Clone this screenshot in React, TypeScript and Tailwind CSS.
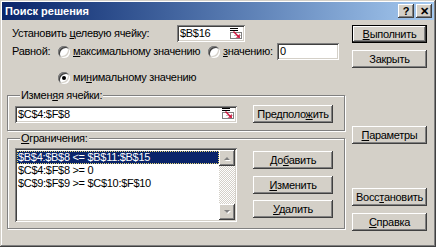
import React from 'react'

const raised =
  'bg-[#d4d0c8] shadow-[inset_-1px_-1px_#404040,inset_1px_1px_#fff,inset_-2px_-2px_#808080,inset_2px_2px_#d4d0c8]'
const sunken =
  'bg-white shadow-[inset_1px_1px_#808080,inset_-1px_-1px_#fff,inset_2px_2px_#404040,inset_-2px_-2px_#d4d0c8]'

function U({ children }: { children: React.ReactNode }) {
  return <span className="underline underline-offset-[1px]">{children}</span>
}

function Btn({
  children,
  w = 'w-[75px]',
  def = false,
  className = '',
}: {
  children: React.ReactNode
  w?: string
  def?: boolean
  className?: string
}) {
  return (
    <div
      className={`${w} h-[18px] flex items-center justify-center ${
        def ? 'border border-black' : ''
      } ${raised} ${className}`}
    >
      <span className="leading-none">{children}</span>
    </div>
  )
}

function Radio({ checked = false }: { checked?: boolean }) {
  return (
    <span
      className={`w-3 h-3 shrink-0 rounded-full flex items-center justify-center ${sunken}`}
    >
      {checked && <span className="w-1 h-1 rounded-full bg-black" />}
    </span>
  )
}

function RefIcon() {
  return (
    <svg width="14" height="12" viewBox="0 0 14 12" className="shrink-0">
      <rect x="1" y="0" width="8" height="1" fill="#000" />
      <rect x="1" y="2" width="8" height="1" fill="#000" />
      <rect x="1.5" y="4.5" width="11" height="6" fill="#fff" stroke="#808080" />
      <line x1="5" y1="7.5" x2="12" y2="7.5" stroke="#c0c0c0" />
      <path d="M5 3 L9.5 7.5 L10.5 5.5 L11 10 L6.5 9.5 L8.5 8.5 L4 4 Z" fill="#d0103a" />
    </svg>
  )
}

function RefEdit({ value, w }: { value: string; w: string }) {
  return (
    <div className={`${w} h-[17px] flex items-center pl-[3px] pr-[2px] ${sunken}`}>
      <span className="flex-1 leading-none">{value}</span>
      <RefIcon />
    </div>
  )
}

function Arrow({ up }: { up?: boolean }) {
  return (
    <div className={`w-4 h-4 flex items-center justify-center ${raised}`}>
      <svg width="7" height="5" viewBox="0 0 7 5">
        {up ? (
          <>
            <path d="M1 5 L4 2 L7 5 Z" fill="#fff" />
            <path d="M0 4 L3 1 L6 4 Z" fill="#808080" />
          </>
        ) : (
          <>
            <path d="M1 1 L7 1 L4 4 Z" fill="#fff" />
            <path d="M0 0 L6 0 L3 3 Z" fill="#808080" />
          </>
        )}
      </svg>
    </div>
  )
}

const constraints = [
  '$B$4:$B$8 <= $B$11:$B$15',
  '$C$4:$F$8 >= 0',
  '$C$9:$F$9 >= $C$10:$F$10',
]

export default function App() {
  return (
    <div
      className="w-[436px] h-[247px] p-[2px] bg-[#d4d0c8] text-[11px] tracking-[-0.3px] text-black shadow-[inset_-1px_-1px_#404040,inset_1px_1px_#d4d0c8,inset_-2px_-2px_#808080,inset_2px_2px_#fff] overflow-hidden"
      style={{ fontFamily: '"Liberation Sans", Arial, sans-serif' }}
    >
      {/* title bar */}
      <div className="h-[18px] flex items-center pl-[3px] pr-[2px] bg-gradient-to-r from-[#0a246a] to-[#a6caf0]">
        <span className="flex-1 text-white font-bold tracking-normal">Поиск решения</span>
        <div className={`w-[16px] h-[14px] flex items-center justify-center font-bold ${raised}`}>?</div>
        <div className={`w-[16px] h-[14px] ml-[2px] flex items-center justify-center font-bold ${raised}`}>✕</div>
      </div>

      <div className="flex">
        {/* left column */}
        <div className="w-[350px]">
          <div className="mt-[5px] h-[17px] flex items-center pl-[10px]">
            <span className="w-[165px]">
              Установить <U>ц</U>елевую ячейку:
            </span>
            <RefEdit value="$B$16" w="w-[68px]" />
          </div>

          <div className="mt-[1px] h-[17px] flex items-center pl-[10px]">
            <span className="w-[46px]">Равной:</span>
            <div className="w-[150px] flex items-center gap-[3px]">
              <Radio />
              <span>
                <U>м</U>аксимальному значению
              </span>
            </div>
            <div className="w-[69px] flex items-center gap-[3px]">
              <Radio />
              <span>
                <U>з</U>начению:
              </span>
            </div>
            <div className={`w-[62px] h-[17px] flex items-center pl-[3px] ${sunken}`}>0</div>
          </div>

          <div className="mt-[11px] h-[13px] flex items-center gap-[3px] pl-[56px]">
            <Radio checked />
            <span>
              ми<U>н</U>имальному значению
            </span>
          </div>

          <fieldset className="mt-[5px] ml-[5px] w-[338px] border border-[#808080] shadow-[1px_1px_#fff,inset_1px_1px_#fff] pl-[7px] pt-[3px] pb-[7px]">
            <legend className="ml-[5px] px-[1px] leading-[13px] bg-[#d4d0c8]">
              Измен<U>я</U>я ячейки:
            </legend>
            <div className="flex items-center gap-[16px] h-[18px]">
              <RefEdit value="$C$4:$F$8" w="w-[222px]" />
              <Btn w="w-[80px]">
                Предполо<U>ж</U>ить
              </Btn>
            </div>
          </fieldset>

          <fieldset className="mt-[1px] ml-[5px] w-[338px] border border-[#808080] shadow-[1px_1px_#fff,inset_1px_1px_#fff] pl-[7px] pt-[3px] pb-[6px]">
            <legend className="ml-[5px] px-[1px] leading-[13px] bg-[#d4d0c8]">
              <U>О</U>граничения:
            </legend>
            <div className="flex gap-[16px]">
              <div className={`w-[222px] h-[74px] p-[2px] flex ${sunken}`}>
                <div className="flex-1 pt-[1px]">
                  {constraints.map((c, i) => (
                    <div
                      key={c}
                      className={`h-[13px] leading-[13px] pl-[1px] whitespace-nowrap ${
                        i === 0
                          ? 'bg-[#0a246a] text-white outline-1 outline-dotted outline-[#e8d878] -outline-offset-1'
                          : ''
                      }`}
                    >
                      {c}
                    </div>
                  ))}
                </div>
                <div className="w-4 flex flex-col bg-[repeating-conic-gradient(#fff_0_25%,#d4d0c8_0_50%)] bg-[length:2px_2px]">
                  <Arrow up />
                  <div className="flex-1" />
                  <Arrow />
                </div>
              </div>
              <div className="flex flex-col mt-[3px]">
                <Btn w="w-[80px]">
                  До<U>б</U>авить
                </Btn>
                <Btn w="w-[80px]" className="mt-[7px]">
                  <U>И</U>зменить
                </Btn>
                <Btn w="w-[80px]" className="mt-[6px]">
                  <U>У</U>далить
                </Btn>
              </div>
            </div>
          </fieldset>
        </div>

        {/* right column */}
        <div className="flex flex-col pt-[5px]">
          <Btn def>
            <U>В</U>ыполнить
          </Btn>
          <Btn className="mt-[7px]">Закрыть</Btn>
          <Btn className="mt-[58px]">
            <U>П</U>араметры
          </Btn>
          <Btn className="mt-[44px]">
            Восс<U>т</U>ановить
          </Btn>
          <Btn className="mt-[7px]">
            <U>С</U>правка
          </Btn>
        </div>
      </div>
    </div>
  )
}
